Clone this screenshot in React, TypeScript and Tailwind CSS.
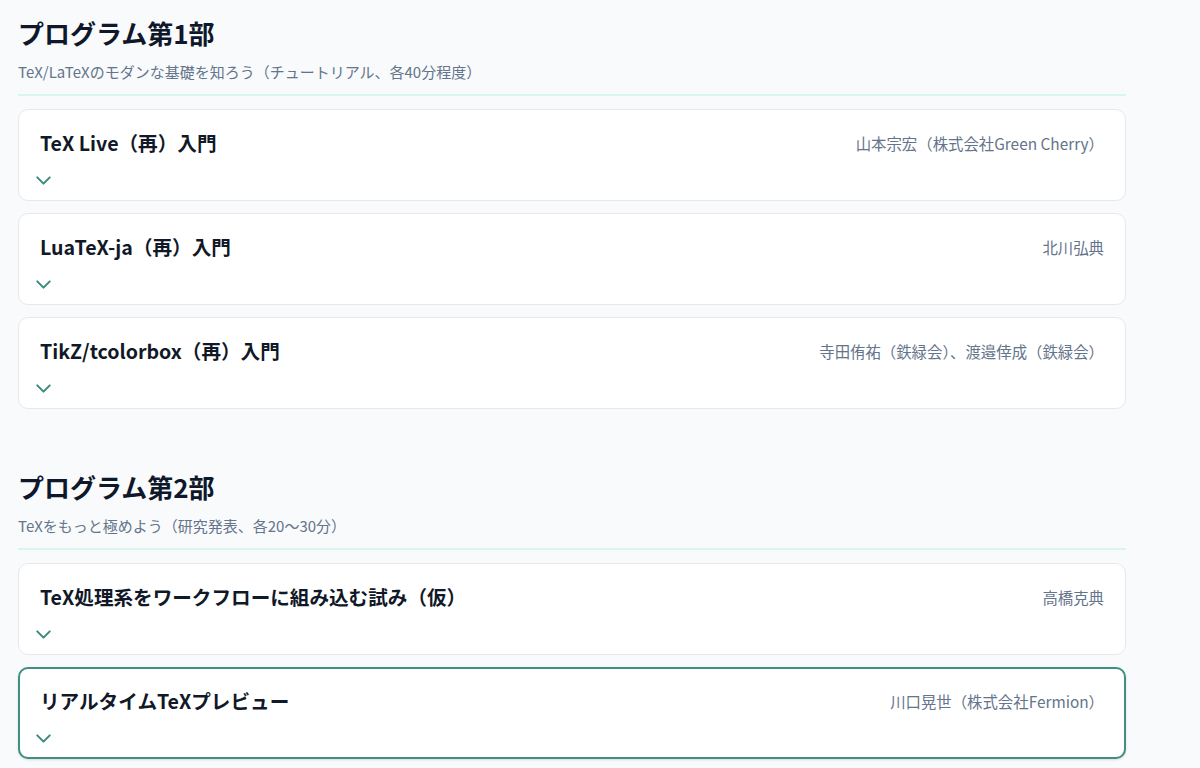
import { ChevronDown } from "lucide-react";

type Talk = { title: string; speaker: string; active?: boolean };

const sections: { heading: string; lead: string; talks: Talk[] }[] = [
  {
    heading: "プログラム第1部",
    lead: "TeX/LaTeXのモダンな基礎を知ろう（チュートリアル、各40分程度）",
    talks: [
      { title: "TeX Live（再）入門", speaker: "山本宗宏（株式会社Green Cherry）" },
      { title: "LuaTeX-ja（再）入門", speaker: "北川弘典" },
      { title: "TikZ/tcolorbox（再）入門", speaker: "寺田侑祐（鉄緑会）、渡邉倖成（鉄緑会）" },
    ],
  },
  {
    heading: "プログラム第2部",
    lead: "TeXをもっと極めよう（研究発表、各20〜30分）",
    talks: [
      { title: "TeX処理系をワークフローに組み込む試み（仮）", speaker: "高橋克典" },
      { title: "リアルタイムTeXプレビュー", speaker: "川口晃世（株式会社Fermion）", active: true },
    ],
  },
];

function TalkCard({ talk }: { talk: Talk }) {
  return (
    <div
      className={`rounded-[10px] bg-white ${
        talk.active
          ? "border-2 border-[#3f8f82] px-[20px] pt-[18px] pb-[8px] shadow-sm"
          : "border border-[#e6e8ec] px-[21px] pt-[19px] pb-[9px]"
      }`}
    >
      <div className="flex items-center justify-between">
        <h3 className="text-[19.6px] leading-[28px] font-bold text-[#111827]">{talk.title}</h3>
        <span className="text-[15.4px] leading-[28px] text-[#64748b]">{talk.speaker}</span>
      </div>
      <div className="mt-[12px] -ml-[9px] flex h-[22px] items-center">
        <ChevronDown className="h-[25px] w-[25px] text-[#3a8a7c]" strokeWidth={1.9} />
      </div>
    </div>
  );
}

export default function App() {
  return (
    <div
      className="min-h-[768px] bg-[#f8fafc]"
      style={{ fontFamily: '"Noto Sans CJK JP", "Noto Sans", sans-serif' }}
    >
      <div className="ml-[18px] w-[1108px] pt-[15px]">
        {sections.map((s, i) => (
          <section key={s.heading} className={i > 0 ? "mt-[60px]" : ""}>
            <div className="border-b-2 border-[#d8f6ef] pb-[11px]">
              <h2 className="text-[26px] leading-[36px] font-bold text-[#0f172a]">{s.heading}</h2>
              <p className="mt-[10px] text-[15px] leading-[22px] text-[#64748b]">{s.lead}</p>
            </div>
            <div className="mt-[13px] flex flex-col gap-[12px]">
              {s.talks.map((t) => (
                <TalkCard key={t.title} talk={t} />
              ))}
            </div>
          </section>
        ))}
      </div>
    </div>
  );
}
